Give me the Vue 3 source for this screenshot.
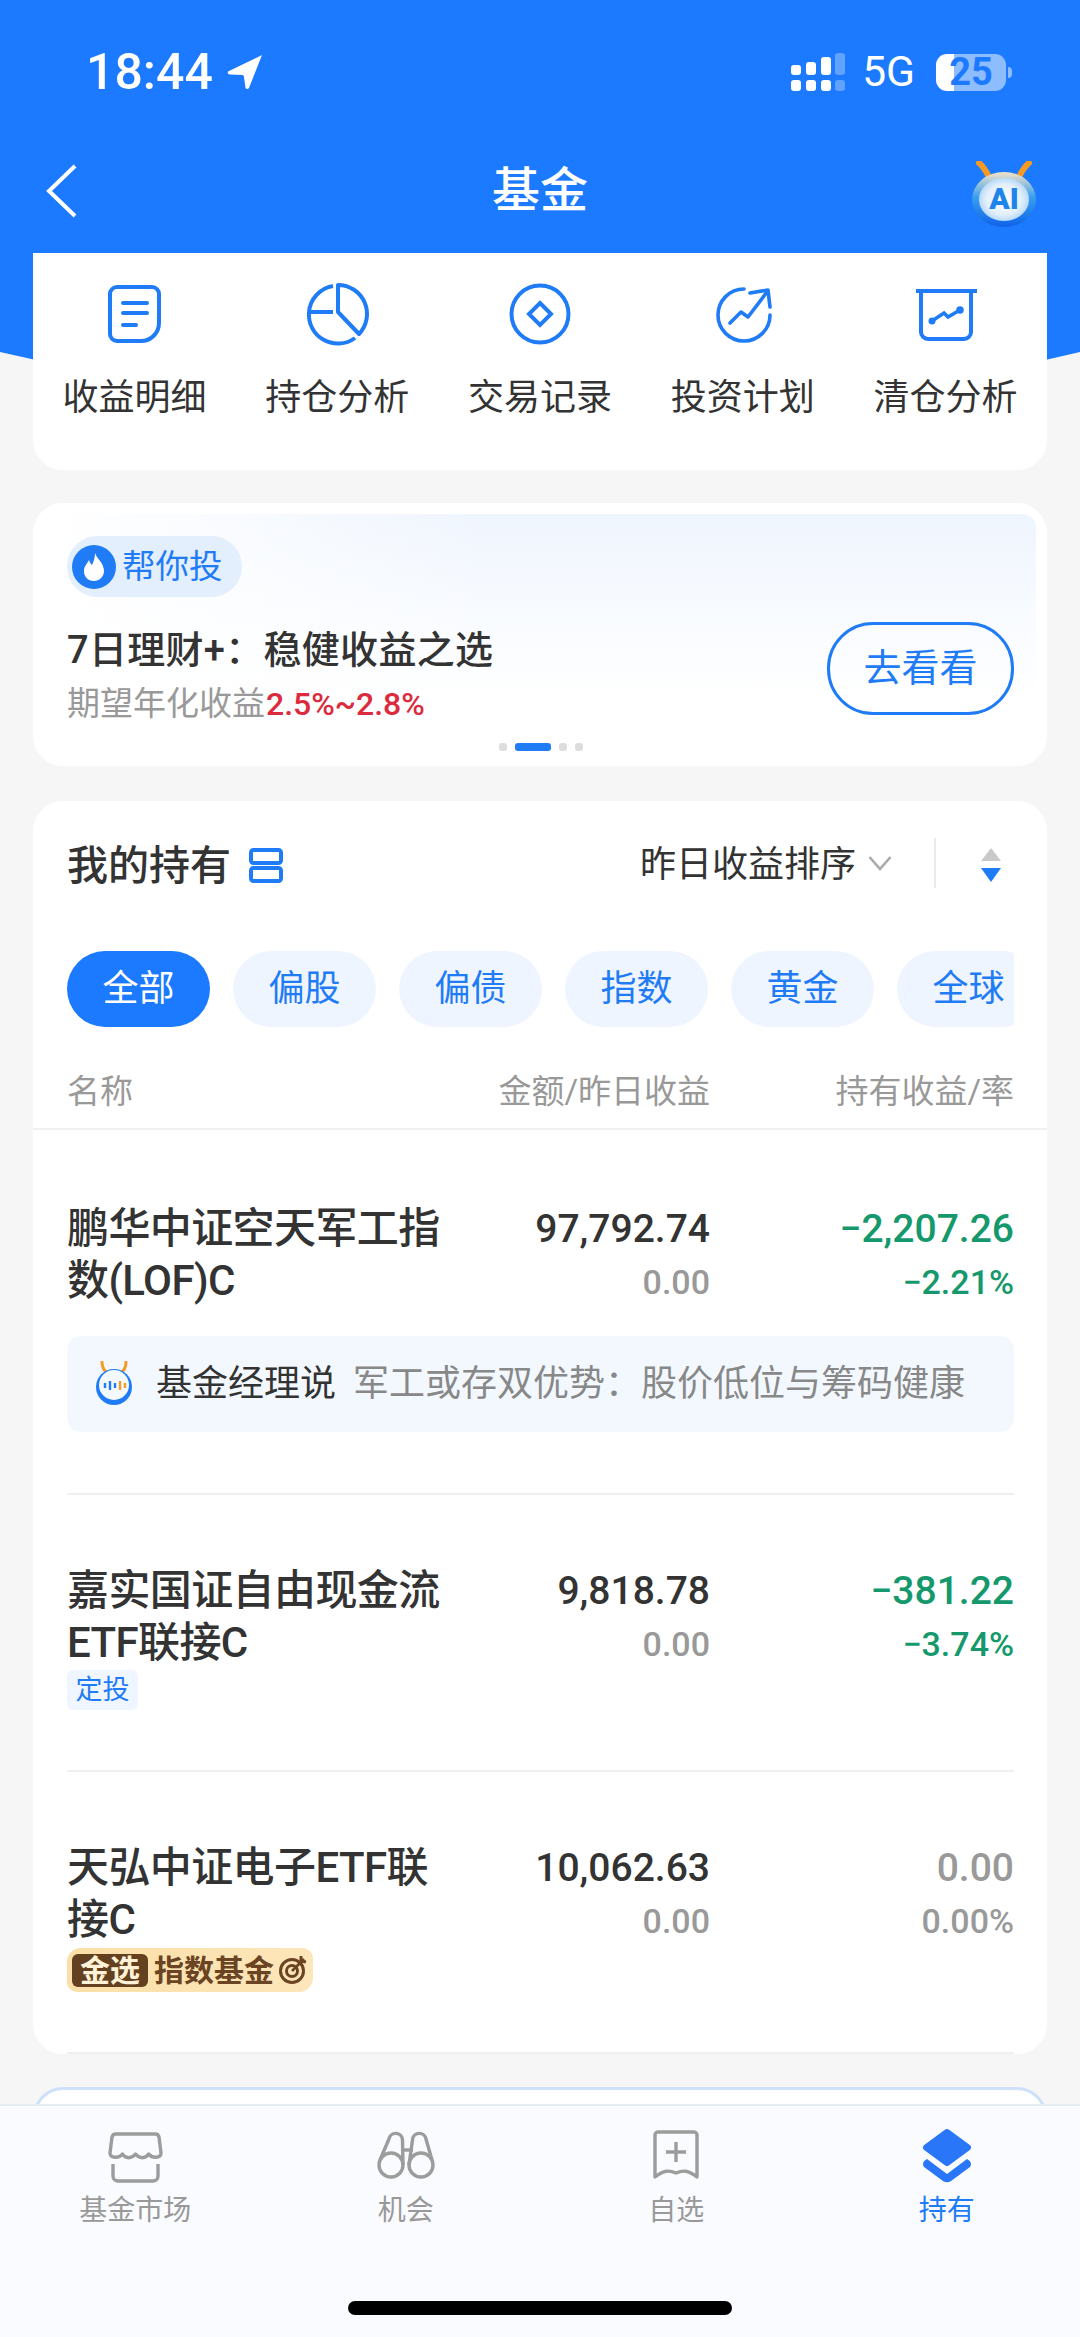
<template>
  <div class="page">
    <div class="scroll">
      <div class="hero"></div>

      <div class="status">
        <span class="time">18:44</span>
        <svg class="loc" width="36" height="36" viewBox="0 0 36 36">
          <path d="M35 1 L1 17.5 Q0 20 3 20.5 L15.5 21 Q17 21 17 23 L18.5 34 Q20 36 22 34 Z" fill="#fff" />
        </svg>
        <div class="status-right">
          <svg class="signal" width="54" height="38" viewBox="0 0 54 38">
            <rect x="0" y="12" width="10" height="10" rx="3" fill="#fff" />
            <rect x="15" y="9" width="10" height="13" rx="3" fill="#fff" />
            <rect x="30" y="4" width="10" height="18" rx="3" fill="#fff" />
            <rect x="44" y="0" width="10" height="22" rx="3" fill="#fff" opacity=".3" />
            <rect x="0" y="27" width="10" height="11" rx="3" fill="#fff" />
            <rect x="15" y="27" width="10" height="11" rx="3" fill="#fff" />
            <rect x="30" y="27" width="10" height="11" rx="3" fill="#fff" />
            <rect x="44" y="27" width="10" height="11" rx="3" fill="#fff" opacity=".3" />
          </svg>
          <span class="net">5G</span>
          <div class="battery"><span>25</span></div>
        </div>
      </div>

      <div class="nav">
        <svg class="back" width="32" height="54" viewBox="0 0 32 54">
          <path d="M29 2 L3 27 L29 52" fill="none" stroke="#fff" stroke-width="4" />
        </svg>
        <span class="nav-title">基金</span>
        <div class="ai">
          <svg class="ai-ears" width="56" height="20" viewBox="0 0 56 20">
            <path d="M3 2 Q8 6 13 16 M53 2 Q48 6 43 16" fill="none" stroke="#f59a23" stroke-width="6" stroke-linecap="round" />
          </svg>
          <div class="ai-ball"><span>AI</span></div>
        </div>
      </div>

      <section class="card menu">
        <div class="menu-item">
          <svg width="80" height="70" viewBox="0 0 80 70" fill="none" stroke="#1f7cf6" stroke-width="4" stroke-linecap="round">
            <path d="M23 9 H58 a7 7 0 0 1 7 7 V45 a18 18 0 0 1 -18 18 H23 a7 7 0 0 1 -7 -7 V16 a7 7 0 0 1 7 -7 Z" />
            <path d="M29 25 H53 M29 35 H53 M29 47 H42" />
          </svg>
          <span>收益明细</span>
        </div>
        <div class="menu-item">
          <svg width="80" height="70" viewBox="0 0 80 70" fill="none" stroke="#1f7cf6" stroke-width="4" stroke-linejoin="round">
            <path d="M41 7 A29 29 0 0 1 62 56 L41 34 Z" />
            <path d="M36 8 A29 29 0 0 0 12 34 H36 M12 34 A29 29 0 0 0 58 60" />
          </svg>
          <span>持仓分析</span>
        </div>
        <div class="menu-item">
          <svg width="80" height="70" viewBox="0 0 80 70" fill="none" stroke="#1f7cf6" stroke-width="4">
            <circle cx="40" cy="36" r="28.5" />
            <path d="M40 25 L51 36 L40 47 L29 36 Z" />
          </svg>
          <span>交易记录</span>
        </div>
        <div class="menu-item">
          <svg width="80" height="70" viewBox="0 0 80 70" fill="none" stroke="#1f7cf6" stroke-width="3.6" stroke-linecap="round" stroke-linejoin="round">
            <path d="M41 11 A26 26 0 1 0 67 37" />
            <path d="M27 45 L38 34 L45 39 L64 14 M47 15 L65 12 L67 29" />
          </svg>
          <span>投资计划</span>
        </div>
        <div class="menu-item">
          <svg width="80" height="70" viewBox="0 0 80 70" fill="none" stroke="#1f7cf6" stroke-width="4">
            <path d="M10 13 H71" />
            <path d="M15 13 V54 a7 7 0 0 0 7 7 H58 a7 7 0 0 0 7 -7 V13" />
            <path d="M26 43 L38 35 L42 39 L54 32" stroke-width="3.6" />
            <circle cx="26" cy="43" r="3.5" fill="#1f7cf6" stroke="none" />
            <circle cx="54" cy="32" r="3.8" fill="#1f7cf6" stroke="none" />
          </svg>
          <span>清仓分析</span>
        </div>
      </section>

      <section class="card promo">
        <div class="promo-panel">
          <div class="promo-text">
            <div class="promo-tag">
              <svg width="44" height="44" viewBox="0 0 44 44">
                <circle cx="22" cy="22" r="22" fill="#1f7cf6" />
                <path d="M23 8 C25 14 32 18 32 26 C32 32 27 36 22 36 C16 36 12 32 12 26 C12 21 15 19 17 15 C18 18 19 19 20 20 C22 16 23 12 23 8 Z" fill="#fff" />
              </svg>
              <span>帮你投</span>
            </div>
            <div class="promo-title">7日理财+：稳健收益之选</div>
            <div class="promo-sub">期望年化收益<em>2.5%~2.8%</em></div>
          </div>
          <div class="promo-btn">去看看</div>
        </div>
        <div class="dots">
          <i></i><i class="on"></i><i></i><i></i>
        </div>
      </section>

      <section class="card holdings">
        <div class="hold-head">
          <span class="hold-title">我的持有</span>
          <svg class="hold-icon" width="36" height="36" viewBox="0 0 36 36" fill="none" stroke="#1f7cf6" stroke-width="4">
            <rect x="3" y="2" width="30" height="13" rx="2.5" />
            <rect x="3" y="20" width="30" height="13" rx="2.5" />
          </svg>
          <span class="sort">昨日收益排序</span>
          <svg class="sort-arrow" width="24" height="16" viewBox="0 0 24 16">
            <path d="M1.5 2 L12 14 L22.5 2" fill="none" stroke="#aaa" stroke-width="2.6" />
          </svg>
          <div class="head-line"></div>
          <svg class="order" width="20" height="34" viewBox="0 0 20 34">
            <path d="M10 0 L20 13 H0 Z" fill="#c9c9c9" />
            <path d="M0 20 H20 L10 34 Z" fill="#1f7cf6" />
          </svg>
        </div>

        <div class="chips">
          <div v-for="(c, i) in chips" :key="c" class="chip" :class="{ active: i === 0 }">{{ c }}</div>
        </div>

        <div class="cols">
          <span class="c-name">名称</span>
          <span class="c-amt">金额/昨日收益</span>
          <span class="c-pnl">持有收益/率</span>
        </div>

        <div v-for="f in funds" :key="f.name" class="row">
          <div class="row-main">
            <div class="fund-name">
              {{ f.name }}
              <div v-if="f.tag === 'plan'" class="tag-plan">定投</div>
              <div v-if="f.tag === 'gold'" class="tag-gold">
                <span class="gold-mark">金选</span>
                <span class="gold-text">指数基金</span>
                <svg width="30" height="30" viewBox="0 0 30 30" fill="none" stroke="#6a4423">
                  <circle cx="14" cy="16" r="11.5" stroke-width="3" />
                  <circle cx="14" cy="16" r="5.5" stroke-width="3" />
                  <path d="M14 16 L26 4" stroke-width="2.6" />
                  <path d="M23 1 L23 6 L28 7" stroke-width="3" />
                </svg>
              </div>
            </div>
            <div class="amt">
              <div class="v1">{{ f.amount }}</div>
              <div class="v2 grey">{{ f.yesterday }}</div>
            </div>
            <div class="pnl" :class="f.down ? 'green' : 'grey'">
              <div class="v1">{{ f.pnl }}</div>
              <div class="v2">{{ f.rate }}</div>
            </div>
          </div>
          <div v-if="f.note" class="note">
            <svg width="42" height="46" viewBox="0 0 42 46">
              <path d="M9 1 Q9 7 13 11 M33 1 Q33 7 29 11" fill="none" stroke="#f59a23" stroke-width="3" stroke-linecap="round" />
              <circle cx="21" cy="26" r="18" fill="#1f7cf6" />
              <circle cx="21" cy="24" r="15" fill="#f4f8ff" />
              <path d="M12 22 V27 M17 20 V29 M22 22 V27" stroke="#1f7cf6" stroke-width="2.4" />
              <path d="M27 20 V29 M32 22 V27" stroke="#f59a23" stroke-width="2.4" />
            </svg>
            <span class="note-who">基金经理说</span>
            <span class="note-text">{{ f.note }}</span>
          </div>
        </div>
      </section>

      <section class="next-card"></section>
    </div>

    <footer class="tabbar">
      <div class="tabs">
        <div class="tab">
          <svg width="80" height="60" viewBox="0 0 80 60" fill="none" stroke="#9c9c9c" stroke-width="3.4" stroke-linejoin="round">
            <path d="M21 8 H60 a4 4 0 0 1 4 3 L66 27 c0 5 -8 6 -12.500 1 c-3 5 -9 5 -13 0 c-4 5 -10 5 -13 0 c-4 5 -12.500 4 -12.500 -1 L17 11 a4 4 0 0 1 4 -3 Z" />
            <path d="M18 38 V50 a5 5 0 0 0 5 5 H58 a5 5 0 0 0 5 -5 V38" />
          </svg>
          <span>基金市场</span>
        </div>
        <div class="tab">
          <svg width="80" height="60" viewBox="0 0 80 60" fill="none" stroke="#9c9c9c" stroke-width="3.4">
            <circle cx="25" cy="39" r="12" />
            <circle cx="55" cy="39" r="12" />
            <path d="M14 34 L23 13 a6.800 6.800 0 0 1 13.500 1 L37 39" />
            <path d="M66 34 L60 13 a6.800 6.800 0 0 0 -13.500 1 L43 39" />
            <path d="M37 24 H47" />
          </svg>
          <span>机会</span>
        </div>
        <div class="tab">
          <svg width="80" height="60" viewBox="0 0 80 60" fill="none" stroke="#9c9c9c" stroke-width="3.4" stroke-linejoin="round">
            <path d="M22 6 H58 a3 3 0 0 1 3 3 V51 C52 44 47 44 40 47 C33 44 28 44 19 51 V9 a3 3 0 0 1 3 -3 Z" />
            <path d="M30 26 H50 M40 16 V36" />
          </svg>
          <span>自选</span>
        </div>
        <div class="tab on">
          <svg width="80" height="60" viewBox="0 0 80 60">
            <path d="M40 6 L61 21.500 L40 37 L19 21.500 Z" fill="#2a76f8" stroke="#2a76f8" stroke-width="6" stroke-linejoin="round" />
            <path d="M20 33 L40 48 L60 33 Q66 36 63 41 L44 55 Q40 57.500 36 55 L17 41 Q14 36 20 33 Z" fill="#2a76f8" />
          </svg>
          <span>持有</span>
        </div>
      </div>
      <div class="home-bar"></div>
    </footer>
  </div>
</template>

<script setup>
const chips = ["全部", "偏股", "偏债", "指数", "黄金", "全球"];

const funds = [
  {
    name: "鹏华中证空天军工指数(LOF)C",
    amount: "97,792.74",
    yesterday: "0.00",
    pnl: "−2,207.26",
    rate: "−2.21%",
    down: true,
    note: "军工或存双优势：股价低位与筹码健康",
  },
  {
    name: "嘉实国证自由现金流ETF联接C",
    amount: "9,818.78",
    yesterday: "0.00",
    pnl: "−381.22",
    rate: "−3.74%",
    down: true,
    tag: "plan",
  },
  {
    name: "天弘中证电子ETF联接C",
    amount: "10,062.63",
    yesterday: "0.00",
    pnl: "0.00",
    rate: "0.00%",
    tag: "gold",
  },
];
</script>

<style>
html,
body {
  margin: 0;
  background: #f6f6f6;
}
</style>

<style scoped>
.page {
  width: 1080px;
  height: 2337px;
  display: flex;
  flex-direction: column;
  overflow: hidden;
  background: #f6f6f6;
  color: #333;
  font-family: Roboto, "Noto Sans CJK SC", sans-serif;
}
.scroll {
  position: relative;
  flex: 1;
  min-height: 0;
  overflow: hidden;
}
.hero {
  position: absolute;
  top: 0;
  left: 0;
  width: 1080px;
  height: 480px;
  background: #1b7aff;
  clip-path: path("M0 0 H1080 V352 Q540 480 0 352 Z");
}
.status {
  position: relative;
  height: 112px;
  padding: 16px 74px 0 86px;
  display: flex;
  align-items: center;
  color: #fff;
}
.time {
  font-size: 50px;
  font-weight: 500;
  line-height: 50px;
}
.loc {
  margin-left: 14px;
}
.status-right {
  margin-left: auto;
  display: flex;
  align-items: center;
}
.net {
  margin-left: 17px;
  font-size: 42.500px;
  line-height: 44px;
}
.battery {
  position: relative;
  width: 70px;
  height: 37px;
  margin-left: 21px;
  border-radius: 11px;
  background: linear-gradient(to right, #fff 18px, rgba(255, 255, 255, 0.5) 18px);
  color: #1b7aff;
  font-size: 38px;
  font-weight: 700;
  line-height: 37px;
  text-align: center;
}
.battery::after {
  content: "";
  position: absolute;
  top: 13px;
  right: -6px;
  width: 4px;
  height: 11px;
  border-radius: 0 4px 4px 0;
  background: rgba(255, 255, 255, 0.5);
}
.nav {
  position: relative;
  height: 125px;
  padding: 0 46px;
  display: grid;
  grid-template-columns: 1fr auto 1fr;
  align-items: center;
}
.nav-title {
  color: #fff;
  font-size: 48px;
  font-weight: 500;
  line-height: 60px;
}
.ai {
  position: relative;
  justify-self: end;
  width: 64px;
  height: 66px;
  margin-top: 6px;
  margin-right: -2px;
}
.ai-ears {
  position: absolute;
  top: 0;
  left: 4px;
}
.ai-ball {
  position: absolute;
  left: 0;
  bottom: 0;
  width: 64px;
  height: 55px;
  border-radius: 50%;
  background:
    radial-gradient(closest-side, #fff 0, #e3effb 55%, #bcdcf8 76%, rgba(188, 220, 248, 0) 80%),
    linear-gradient(to bottom, #f6e3c6, #39a0ee 45%, #0f62e8);
  color: #1f84ea;
  font-size: 30px;
  font-weight: 900;
  line-height: 54px;
  text-align: center;
}
.card {
  position: relative;
  margin: 0 33px;
  background: #fff;
  border-radius: 30px;
}
.menu {
  height: 217px;
  display: grid;
  grid-template-columns: repeat(5, 1fr);
  border-radius: 0 0 30px 30px;
}
.menu-item {
  display: flex;
  flex-direction: column;
  align-items: center;
  padding-top: 25px;
  color: #333;
  font-size: 36px;
  line-height: 50px;
}
.menu-item span {
  margin-top: 25px;
}
.promo {
  margin-top: 33px;
  height: 263px;
  box-sizing: border-box;
  padding: 11px 11px 0 15px;
}
.promo-panel {
  height: 221px;
  box-sizing: border-box;
  padding: 21px 22px 8px 19px;
  display: flex;
  justify-content: space-between;
  align-items: flex-end;
  border-radius: 14px 14px 0 0;
  background:
    linear-gradient(to right, #fff 0, rgba(255, 255, 255, 0) 45%),
    linear-gradient(to bottom, #eff5fe 0, #fafcff 55%, #fff 85%);
}
.promo-tag {
  display: inline-flex;
  align-items: center;
  height: 61px;
  padding: 0 19px 0 5px;
  border-radius: 31px;
  background: #e4effe;
  color: #1f7cf6;
  font-size: 33.500px;
  line-height: 61px;
}
.promo-tag span {
  margin-left: 6px;
}
.promo-title {
  margin-top: 27px;
  color: #333;
  font-size: 38px;
  font-weight: 500;
  letter-spacing: 0.3px;
  line-height: 52px;
}
.promo-sub {
  margin-top: 5px;
  color: #999;
  font-size: 33px;
  line-height: 46px;
}
.promo-sub em {
  margin-left: 1px;
  color: #dc2a3e;
  font-size: 32px;
  font-style: normal;
  font-weight: 500;
}
.promo-btn {
  width: 187px;
  height: 93px;
  box-sizing: border-box;
  margin-bottom: 12px;
  border: 3px solid #1f7cf6;
  border-radius: 46px;
  color: #1f7cf6;
  font-size: 38px;
  line-height: 87px;
  text-align: center;
}
.dots {
  display: flex;
  justify-content: center;
  gap: 8px;
  margin-top: 8px;
  transform: translateX(-1px);
}
.dots i {
  width: 8px;
  height: 8px;
  border-radius: 3px;
  background: #ddd;
}
.dots i.on {
  width: 36px;
  background: #1f7cf6;
}
.holdings {
  margin-top: 35px;
  padding: 37px 33px 0 34px;
}
.hold-head {
  height: 50px;
  display: flex;
  align-items: center;
}
.hold-title {
  margin-top: 6px;
  font-size: 41px;
  font-weight: 500;
  line-height: 50px;
}
.hold-icon {
  margin: 6px 0 0 17px;
}
.sort {
  margin-left: auto;
  margin-top: 3px;
  font-size: 36px;
  line-height: 50px;
}
.sort-arrow {
  margin-left: 12px;
}
.head-line {
  width: 2px;
  height: 50px;
  margin: 0 45px 0 42px;
  background: #eaeaea;
}
.order {
  margin-right: 13px;
  margin-top: 4px;
}
.chips {
  margin-top: 63px;
  display: flex;
  gap: 23px;
  overflow: hidden;
}
.chip {
  flex: none;
  width: 143px;
  height: 76px;
  border-radius: 38px;
  background: #eff5ff;
  color: #1f7cf6;
  font-size: 36px;
  line-height: 76px;
  text-align: center;
}
.chip.active {
  background: #1b7aff;
  color: #fff;
}
.cols {
  display: flex;
  margin: 41px -33px 0 -34px;
  padding: 0 33px 12px 34px;
  border-bottom: 2px solid #f0f0f0;
  color: #999;
  font-size: 33px;
  line-height: 48px;
}
.c-name {
  width: 390px;
}
.c-amt {
  width: 253px;
  text-align: right;
}
.c-pnl {
  flex: 1;
  text-align: right;
}
.row {
  padding: 70px 0 60px;
  border-bottom: 2px solid #f0f0f0;
}
.cols + .row {
  padding: 73px 0 61px;
}
.row-main {
  display: flex;
}
.fund-name {
  width: 390px;
  color: #333;
  font-size: 42px;
  font-weight: 500;
  letter-spacing: -0.6px;
  line-height: 52px;
}
.amt {
  width: 253px;
  text-align: right;
}
.pnl {
  flex: 1;
  text-align: right;
}
.v1 {
  font-size: 39px;
  font-weight: 500;
  line-height: 52px;
}
.v2 {
  font-size: 34px;
  font-weight: 500;
  line-height: 54px;
}
.amt .v1 {
  color: #333;
}
.grey,
.pnl.grey .v1 {
  color: #999;
}
.green {
  color: #15996c;
}
.tag-plan {
  display: block;
  width: 71px;
  height: 40px;
  margin-top: 1px;
  border-radius: 6px;
  background: #f0f6ff;
  color: #1f7cf6;
  font-size: 27px;
  font-weight: 400;
  letter-spacing: 0;
  line-height: 40px;
  text-align: center;
}
.tag-gold {
  display: flex;
  align-items: center;
  width: 246px;
  height: 44px;
  box-sizing: border-box;
  margin-top: 2px;
  padding-left: 5px;
  border-radius: 14px 10px 14px 10px;
  background: linear-gradient(to right, #fbdfa8, #fde6ba);
  letter-spacing: 0;
}
.gold-mark {
  width: 76px;
  height: 33px;
  border-radius: 6px;
  background: #63401f;
  color: #fff2d6;
  font-size: 30px;
  font-weight: 700;
  line-height: 33px;
  text-align: center;
}
.gold-text {
  margin: 0 4px 0 6px;
  color: #6a4423;
  font-size: 30px;
  font-weight: 700;
  line-height: 33px;
}
.note {
  display: flex;
  align-items: center;
  height: 96px;
  margin-top: 27px;
  padding-left: 26px;
  border-radius: 14px;
  background: #f3f8ff;
  font-size: 36px;
  line-height: 50px;
}
.note-who {
  margin-left: 21px;
  color: #333;
}
.note-text {
  margin-left: 17px;
  color: #888;
}
.next-card {
  margin: 33px 33px 0;
  height: 60px;
  box-sizing: border-box;
  border: 3px solid #cfe0fb;
  border-radius: 30px 30px 0 0;
  background: #fff;
}
.tabbar {
  flex: none;
  position: relative;
  height: 233px;
  box-sizing: border-box;
  border-top: 2px solid #e6ebf2;
  background: #f9fbfe;
}
.tabs {
  display: grid;
  grid-template-columns: repeat(4, 270.500px);
  padding: 20px 0 0 0;
}
.tab {
  display: flex;
  flex-direction: column;
  align-items: center;
  color: #999;
  font-size: 28px;
  line-height: 40px;
}
.tab span {
  margin-top: 5px;
}
.tab.on {
  color: #1f7cf6;
}
.home-bar {
  position: absolute;
  left: 348px;
  bottom: 22px;
  width: 384px;
  height: 14px;
  border-radius: 7px;
  background: #000;
}
</style>
